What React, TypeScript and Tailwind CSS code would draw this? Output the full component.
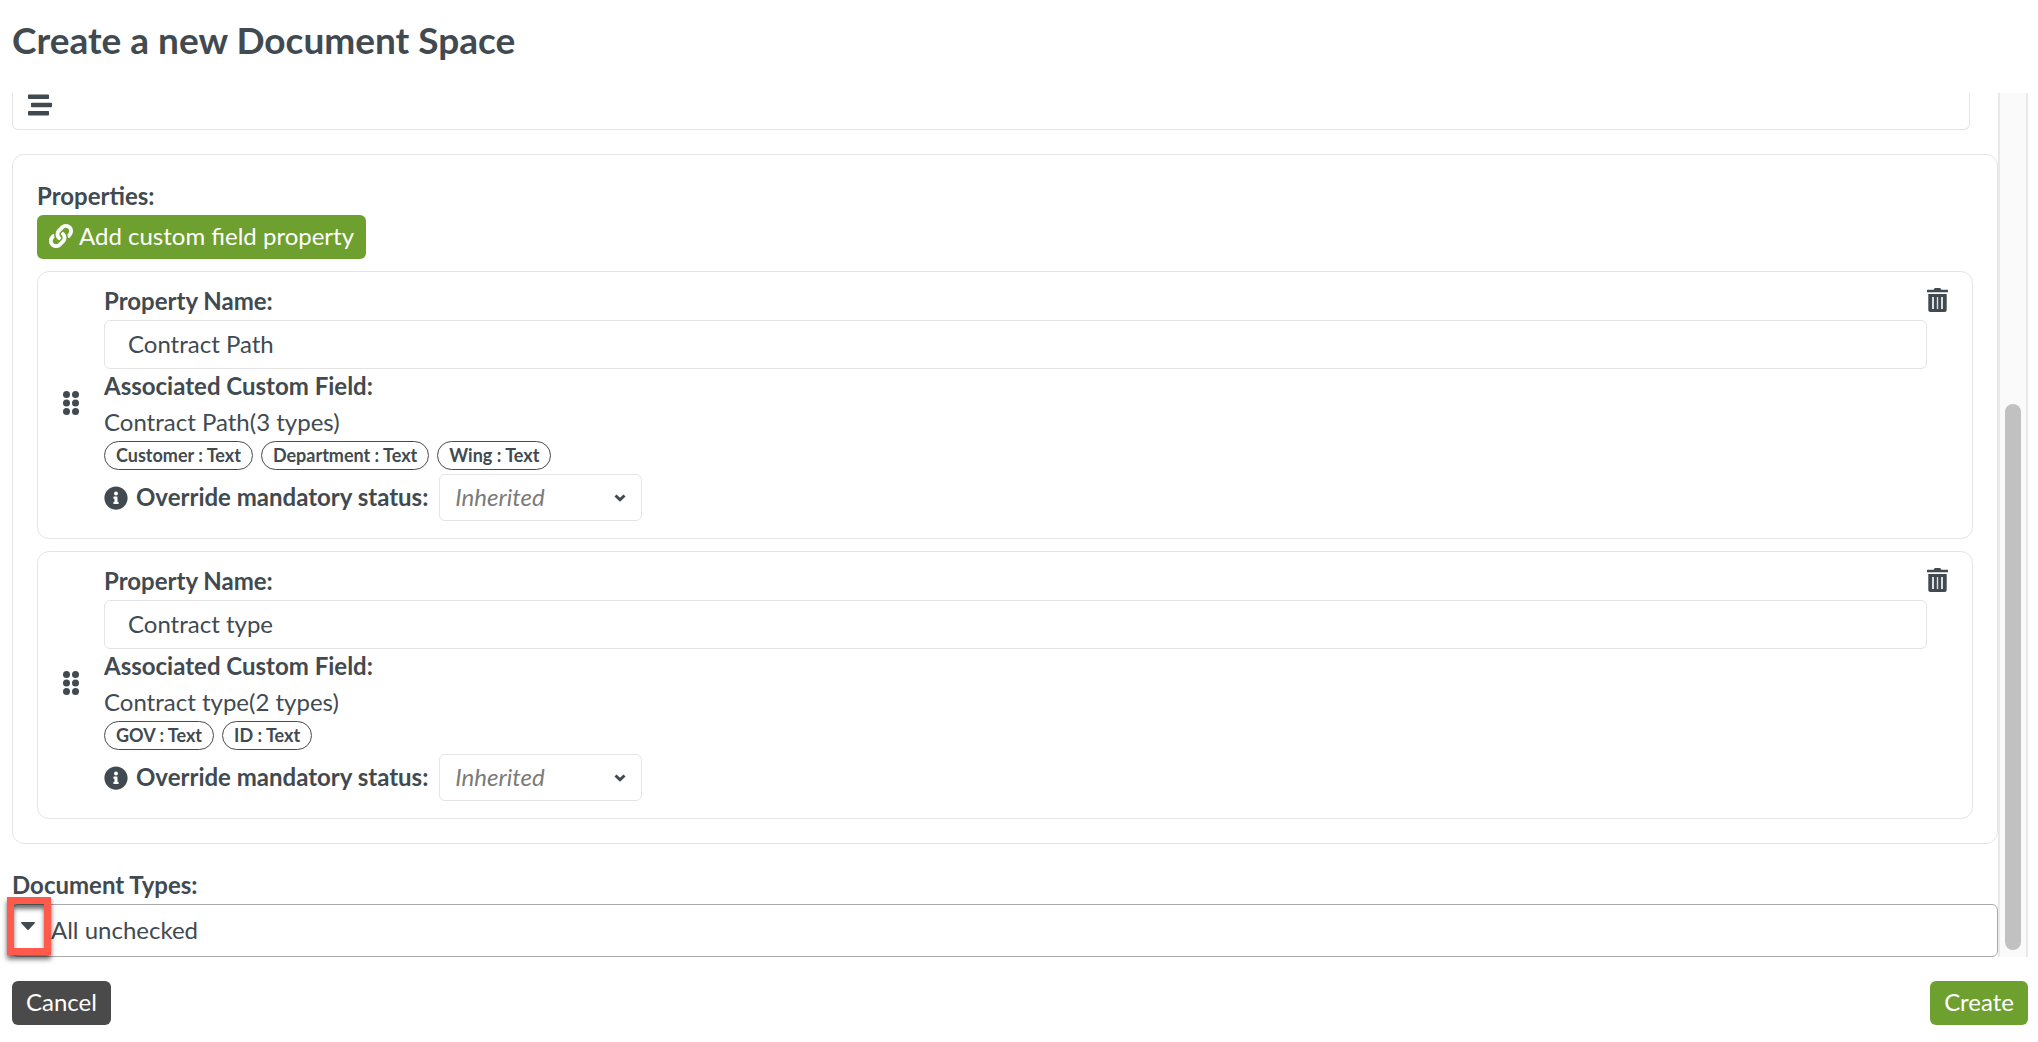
import { FaInfoCircle, FaLink, FaStream } from "react-icons/fa";

type Property = { id: string; name: string; types: string[] };

const properties: Property[] = [
  { id: "path", name: "Contract Path", types: ["Customer : Text", "Department : Text", "Wing : Text"] },
  { id: "type", name: "Contract type", types: ["GOV : Text", "ID : Text"] },
];

function GripIcon() {
  return (
    <svg viewBox="0 0 16 24" className="h-6 w-4 fill-current" aria-hidden="true">
      {[3.5, 12, 20.5].map((y) => (
        <g key={y}>
          <circle cx="3.5" cy={y} r="3.5" />
          <circle cx="12.5" cy={y} r="3.5" />
        </g>
      ))}
    </svg>
  );
}

function TrashIcon() {
  return (
    <svg viewBox="0 0 21 24" className="h-6 w-[21px]" aria-hidden="true">
      <path
        className="fill-current"
        d="M7.3.8A.9.9 0 0 1 8.2 0h4.6a.9.9 0 0 1 .9.8l.5.9h6.3a.5.5 0 0 1 .5.5v1.6a.5.5 0 0 1-.5.5H.5a.5.5 0 0 1-.5-.5V2.2a.5.5 0 0 1 .5-.5h6.3zM1.3 6h18.4v16a2 2 0 0 1-2 2H3.3a2 2 0 0 1-2-2z"
      />
      <path className="fill-[#dcdddf]" d="M5 9h2v12H5zM9.8 9h1.400v12H9.800zM14 9h2v12h-2z" />
    </svg>
  );
}

function ChevronIcon() {
  return (
    <svg
      viewBox="0 0 12 8"
      className="pointer-events-none col-start-1 row-start-1 mr-4 h-2 w-3 justify-self-end"
      aria-hidden="true"
    >
      <path d="M1.500 1.500 6 5.800l4.500-4.300" fill="none" stroke="currentColor" strokeWidth="3" />
    </svg>
  );
}

function CaretIcon() {
  return (
    <svg viewBox="0 0 14 8" className="h-2 w-3.5 fill-current" aria-hidden="true">
      <path d="M.8 0h12.4c.8 0 1 .8.5 1.300L7.900 7.500a1.200 1.200 0 0 1-1.800 0L.3 1.300C-.2.8 0 0 .8 0z" />
    </svg>
  );
}

function PropertyCard({ property }: { property: Property }) {
  return (
    <li className="flex rounded-xl border border-[#e4e4e4] pt-3 pb-[17px]">
      <button type="button" aria-label="Reorder property" className="ml-[25px] flex w-[41px] items-center">
        <GripIcon />
      </button>
      <div className="min-w-0 flex-1">
        <label htmlFor={`${property.id}-name`} className="block pb-0.5 leading-[34px] font-bold">
          Property Name:
        </label>
        <input
          id={`${property.id}-name`}
          type="text"
          defaultValue={property.name}
          className="block h-[49px] w-full rounded-md border border-[#e4e4e4] bg-white px-[23px] pb-0.5 outline-none"
        />
        <p className="pb-0.5 leading-[34px] font-bold">Associated Custom Field:</p>
        <p className="pb-0.5 leading-[34px]">
          {property.name}({property.types.length} types)
        </p>
        <ul className="flex gap-2">
          {property.types.map((type) => (
            <li
              key={type}
              className="h-[29px] rounded-full border border-[#4a4a4a] px-[11px] text-[18px] leading-[26px] font-bold"
            >
              {type}
            </li>
          ))}
        </ul>
        <div className="mt-1 flex items-center gap-2">
          <FaInfoCircle className="size-6" aria-hidden="true" />
          <label htmlFor={`${property.id}-status`} className="mr-[3px] pb-0.5 leading-[34px] font-bold">
            Override mandatory status:
          </label>
          <div className="grid items-center">
            <select
              id={`${property.id}-status`}
              className="col-start-1 row-start-1 h-[47px] w-[203px] appearance-none rounded-md border border-[#e4e4e4] bg-white px-[15px] pb-0.5 text-[#7b7b7b] italic outline-none"
            >
              <option>Inherited</option>
            </select>
            <ChevronIcon />
          </div>
        </div>
      </div>
      <div className="mr-6 flex w-[21px] flex-col pt-1">
        <button type="button" aria-label="Delete property">
          <TrashIcon />
        </button>
      </div>
    </li>
  );
}

export default function App() {
  return (
    <main className="bg-white pr-[10px] pl-3 font-['Lato',sans-serif] text-[24px] leading-9 text-[#414a50]">
      <h1 className="flex h-[93px] items-center pb-3.5 text-[37px] leading-[44px] font-bold">
        Create a new Document Space
      </h1>

      <div className="flex">
        <div className="min-w-0 flex-1">
          <div className="mr-7 flex h-[37px] rounded-b-md border border-t-0 border-[#e4e4e4] pl-[15px]">
            <button type="button" aria-label="Text alignment" className="h-[22px]">
              <FaStream className="size-6" />
            </button>
          </div>

          <section className="mt-6 rounded-xl border border-[#e4e4e4] p-6">
            <h2 className="pb-0.5 leading-[34px] font-bold">Properties:</h2>
            <button
              type="button"
              className="flex h-11 items-center gap-1.5 rounded-md bg-[#6ea030] px-3 pb-0.5 text-white"
            >
              <FaLink className="size-6" aria-hidden="true" />
              Add custom field property
            </button>
            <ul className="mt-3 flex flex-col gap-3">
              {properties.map((property) => (
                <PropertyCard key={property.id} property={property} />
              ))}
            </ul>
          </section>

          <section className="mt-6">
            <h2 className="pb-0.5 leading-[34px] font-bold">Document Types:</h2>
            <div className="relative flex h-[53px] items-center rounded-md border border-[#aaaaaa] pb-0.5 pl-2">
              <button type="button" aria-label="Expand document types" className="flex h-9 w-[30px] pt-2.5">
                <CaretIcon />
              </button>
              <span>All unchecked</span>
              <div className="pointer-events-none absolute -top-2 -left-[6px] h-[58px] w-11 border-[7px] border-[#ff5a4b] shadow-[0_4px_5px_rgba(0,0,0,0.6),inset_0_5px_4px_rgba(0,0,0,0.55)]" />
            </div>
          </section>
        </div>

        <div
          className="flex w-[30px] flex-col items-center border-x-2 border-[#e9e9e9] bg-[#fafafa] pb-[7px]"
          aria-hidden="true"
        >
          <div className="mt-auto h-[546px] w-4 rounded-full bg-[#c1c1c1]" />
        </div>
      </div>

      <footer className="flex justify-between py-6">
        <button type="button" className="h-11 rounded-md bg-[#4a4a4a] px-3.5 pb-0.5 text-white">
          Cancel
        </button>
        <button type="button" className="h-11 rounded-md bg-[#6ea030] px-3.5 pb-0.5 text-white">
          Create
        </button>
      </footer>
    </main>
  );
}
